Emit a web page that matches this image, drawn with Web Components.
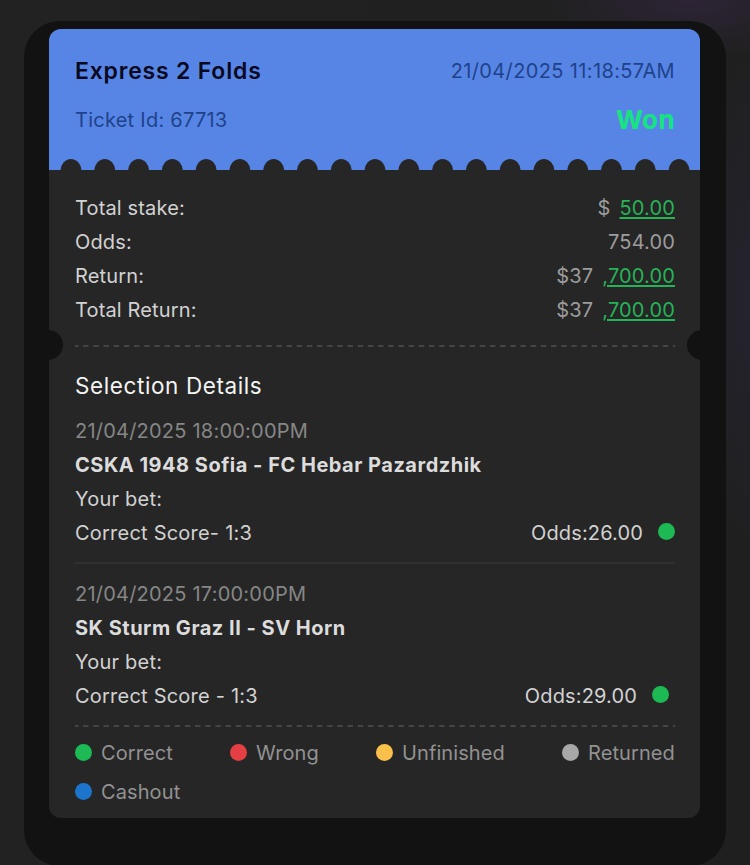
<!DOCTYPE html>
<html lang="en">
<head>
<meta charset="UTF-8">
<meta name="viewport" content="width=device-width, initial-scale=1.0">
<title>Ticket 67713</title>
<style>
    html {
        height: 100%;
    }
    body {
        margin: 0;
        height: 865px;
        overflow: hidden;
        font-family: Inter, "Liberation Sans", sans-serif;
        font-size: 20px;
        color: #d2d2d2;
        background:
            radial-gradient(ellipse 150px 60px at 690px 0, #2d2435, transparent),
            radial-gradient(ellipse 60px 260px at 750px 300px, #25232e, transparent),
            linear-gradient(90deg, #222222, #1f1f1f);
    }
</style>
</head>
<body>
<bet-ticket>
    <ticket-header slot="header" status="Won">
        <span slot="title">Express 2 Folds</span>
        <span slot="date">21/04/2025 11:18:57AM</span>
        <span slot="id">Ticket Id: 67713</span>
    </ticket-header>
    <section slot="summary">
        <summary-row label="Total stake:" prefix="$" linked>50.00</summary-row>
        <summary-row label="Odds:">754.00</summary-row>
        <summary-row label="Return:" prefix="$37" linked>,700.00</summary-row>
        <summary-row label="Total Return:" prefix="$37" linked>,700.00</summary-row>
    </section>
    <bet-selection date="21/04/2025 18:00:00PM" match="CSKA 1948 Sofia - FC Hebar Pazardzhik" odds="26.00">Correct Score- 1:3</bet-selection>
    <bet-selection class="last" date="21/04/2025 17:00:00PM" match="SK Sturm Graz II - SV Horn" odds="29.00">Correct Score - 1:3</bet-selection>
    <ticket-legend slot="legend"></ticket-legend>
</bet-ticket>

<script>
class StatusDot extends HTMLElement {

    constructor() {
        super();
        this.attachShadow({ mode: 'open' });
    }

    connectedCallback() {
        this.shadowRoot.innerHTML = /*html*/`
        <style>
        :host {
            display: block;
            flex: none;
            width: 17px;
            height: 17px;
            border-radius: 50%;
            background: var(--dot, #1db954);
        }
        </style>`;
    }
}

class DashedLine extends HTMLElement {

    constructor() {
        super();
        this.attachShadow({ mode: 'open' });
    }

    connectedCallback() {
        this.shadowRoot.innerHTML = /*html*/`
        <style>
        :host {
            display: block;
            height: 2px;
        }
        svg {
            display: block;
        }
        </style>
        <svg width="600" height="2"><path d="M0 1H600" stroke="#454545" stroke-width="1.8" stroke-dasharray="5.4 4.77" stroke-dashoffset="2"/></svg>`;
    }
}

class TicketHeader extends HTMLElement {

    constructor() {
        super();
        this.attachShadow({ mode: 'open' });
    }

    static get styles() {
        return /*css*/`
        :host {
            display: block;
            height: 141px;
            color: #20428a;
            background: #5785e6;
        }
        .lines {
            box-sizing: border-box;
            height: 130px;
            padding: 17px 25px 0 26px;
        }
        .line {
            display: flex;
            justify-content: space-between;
            align-items: center;
            height: 49px;
        }
        .title {
            font-size: 23px;
            font-weight: 600;
            letter-spacing: 0.8px;
            color: #07091f;
        }
        .date {
            letter-spacing: 0.37px;
        }
        .id {
            letter-spacing: 0.25px;
        }
        .status {
            font-size: 26px;
            font-weight: 700;
            letter-spacing: 0.4px;
            color: #14e57f;
        }
        svg {
            display: block;
        }
        `;
    }

    // bites along the bottom edge of the header
    get perforation() {
        let holes = '';
        for (let i = 0; i < 19; i++) {
            const x = (22 + i * 33.78).toFixed(2);
            holes += `<ellipse cx="${x}" cy="12" rx="10.5" ry="12"/>`;
        }
        return holes;
    }

    connectedCallback() {
        this.shadowRoot.innerHTML = /*html*/`
        <style>${TicketHeader.styles}</style>
        <div class="lines">
            <div class="line">
                <div class="title"><slot name="title"></slot></div>
                <div class="date"><slot name="date"></slot></div>
            </div>
            <div class="line">
                <div class="id"><slot name="id"></slot></div>
                <div class="status">${this.getAttribute('status')}</div>
            </div>
        </div>
        <svg width="652" height="11" fill="#262626">${this.perforation}</svg>`;
    }
}

class SummaryRow extends HTMLElement {

    constructor() {
        super();
        this.attachShadow({ mode: 'open' });
    }

    static get styles() {
        return /*css*/`
        :host {
            display: flex;
            justify-content: space-between;
            align-items: center;
            height: 34px;
            letter-spacing: 0.15px;
        }
        .value {
            display: flex;
            gap: 9px;
            letter-spacing: 0.15px;
            color: #9c9c9c;
        }
        .linked {
            color: #25b357;
            text-decoration: underline;
            text-decoration-thickness: 1.5px;
            text-underline-offset: 2px;
        }
        `;
    }

    connectedCallback() {
        const prefix = this.getAttribute('prefix');
        this.shadowRoot.innerHTML = /*html*/`
        <style>${SummaryRow.styles}</style>
        <span>${this.getAttribute('label')}</span>
        <span class="value">
            ${prefix ? `<span>${prefix}</span>` : ''}
            <span class="${this.hasAttribute('linked') ? 'linked' : ''}"><slot></slot></span>
        </span>`;
    }
}

class BetSelection extends HTMLElement {

    constructor() {
        super();
        this.attachShadow({ mode: 'open' });
    }

    static get styles() {
        return /*css*/`
        :host {
            display: block;
            height: 148px;
            border-bottom: 2px solid #303030;
            margin-bottom: 13px;
            line-height: 34px;
            letter-spacing: 0.22px;
        }
        :host(.last) {
            border-bottom: 0;
            margin-bottom: 0;
        }
        .date {
            color: #868686;
        }
        .match {
            font-weight: 700;
            letter-spacing: 0.5px;
            color: #dcdcdc;
        }
        .score, .odds {
            display: flex;
            align-items: center;
        }
        .score {
            justify-content: space-between;
        }
        .odds {
            gap: 15px;
            letter-spacing: 0.15px;
        }
        :host(.last) .odds {
            padding-right: 6px;
        }
        status-dot {
            margin-top: -3px;
        }
        `;
    }

    connectedCallback() {
        this.shadowRoot.innerHTML = /*html*/`
        <style>${BetSelection.styles}</style>
        <div class="date">${this.getAttribute('date')}</div>
        <div class="match">${this.getAttribute('match')}</div>
        <div>Your bet:</div>
        <div class="score">
            <span><slot></slot></span>
            <span class="odds"><span>Odds:${this.getAttribute('odds')}</span><status-dot></status-dot></span>
        </div>`;
    }
}

class TicketLegend extends HTMLElement {

    constructor() {
        super();
        this.attachShadow({ mode: 'open' });
    }

    static get styles() {
        return /*css*/`
        :host {
            display: flex;
            flex-wrap: wrap;
            justify-content: space-between;
            column-gap: 40px;
            padding-top: 7px;
            line-height: 39px;
            letter-spacing: 0.1px;
            color: #929292;
        }
        .item {
            display: flex;
            align-items: center;
            gap: 9px;
        }
        status-dot {
            margin-top: -3px;
        }
        `;
    }

    connectedCallback() {
        const items = [
            ['Correct', '#1db954'],
            ['Wrong', '#e43f44'],
            ['Unfinished', '#fdc04a'],
            ['Returned', '#a8a8a8'],
            ['Cashout', '#1c74cc']
        ];
        this.shadowRoot.innerHTML = /*html*/`
        <style>${TicketLegend.styles}</style>
        ${items.map(([name, color]) => `<div class="item"><status-dot style="--dot: ${color}"></status-dot><span>${name}</span></div>`).join('')}`;
    }
}

class BetTicket extends HTMLElement {

    constructor() {
        super();
        this.attachShadow({ mode: 'open' });
    }

    static get styles() {
        return /*css*/`
        :host {
            display: block;
            padding: 21px 24px 0;
        }
        .frame {
            box-sizing: border-box;
            height: 845px;
            padding: 8px 26px 0 25px;
            border-radius: 36px;
            background: #121212;
        }
        .card {
            position: relative;
            height: 789px;
            border-radius: 12px;
            overflow: hidden;
            background: #262626;
        }
        .body {
            padding: 21px 25px 0 26px;
        }
        .body > dashed-line {
            margin: 18px 0 0;
        }
        .notch {
            position: absolute;
            top: 301px;
            width: 30px;
            height: 30px;
            border-radius: 50%;
            background: #121212;
        }
        .left {
            left: -16px;
        }
        .right {
            right: -17px;
        }
        h2 {
            margin: 19px 0 8px;
            font-size: 22.5px;
            font-weight: 400;
            line-height: 40px;
            letter-spacing: 0.6px;
            color: #f4f4f4;
        }
        `;
    }

    connectedCallback() {
        this.shadowRoot.innerHTML = /*html*/`
        <style>${BetTicket.styles}</style>
        <div class="frame">
            <div class="card">
                <slot name="header"></slot>
                <div class="body">
                    <slot name="summary"></slot>
                    <dashed-line></dashed-line>
                    <h2>Selection Details</h2>
                    <slot></slot>
                    <dashed-line style="margin-top: 0"></dashed-line>
                    <slot name="legend"></slot>
                </div>
                <div class="notch left"></div>
                <div class="notch right"></div>
            </div>
        </div>`;
    }
}

customElements.define('status-dot', StatusDot);
customElements.define('dashed-line', DashedLine);
customElements.define('ticket-header', TicketHeader);
customElements.define('summary-row', SummaryRow);
customElements.define('bet-selection', BetSelection);
customElements.define('ticket-legend', TicketLegend);
customElements.define('bet-ticket', BetTicket);
</script>
</body>
</html>
